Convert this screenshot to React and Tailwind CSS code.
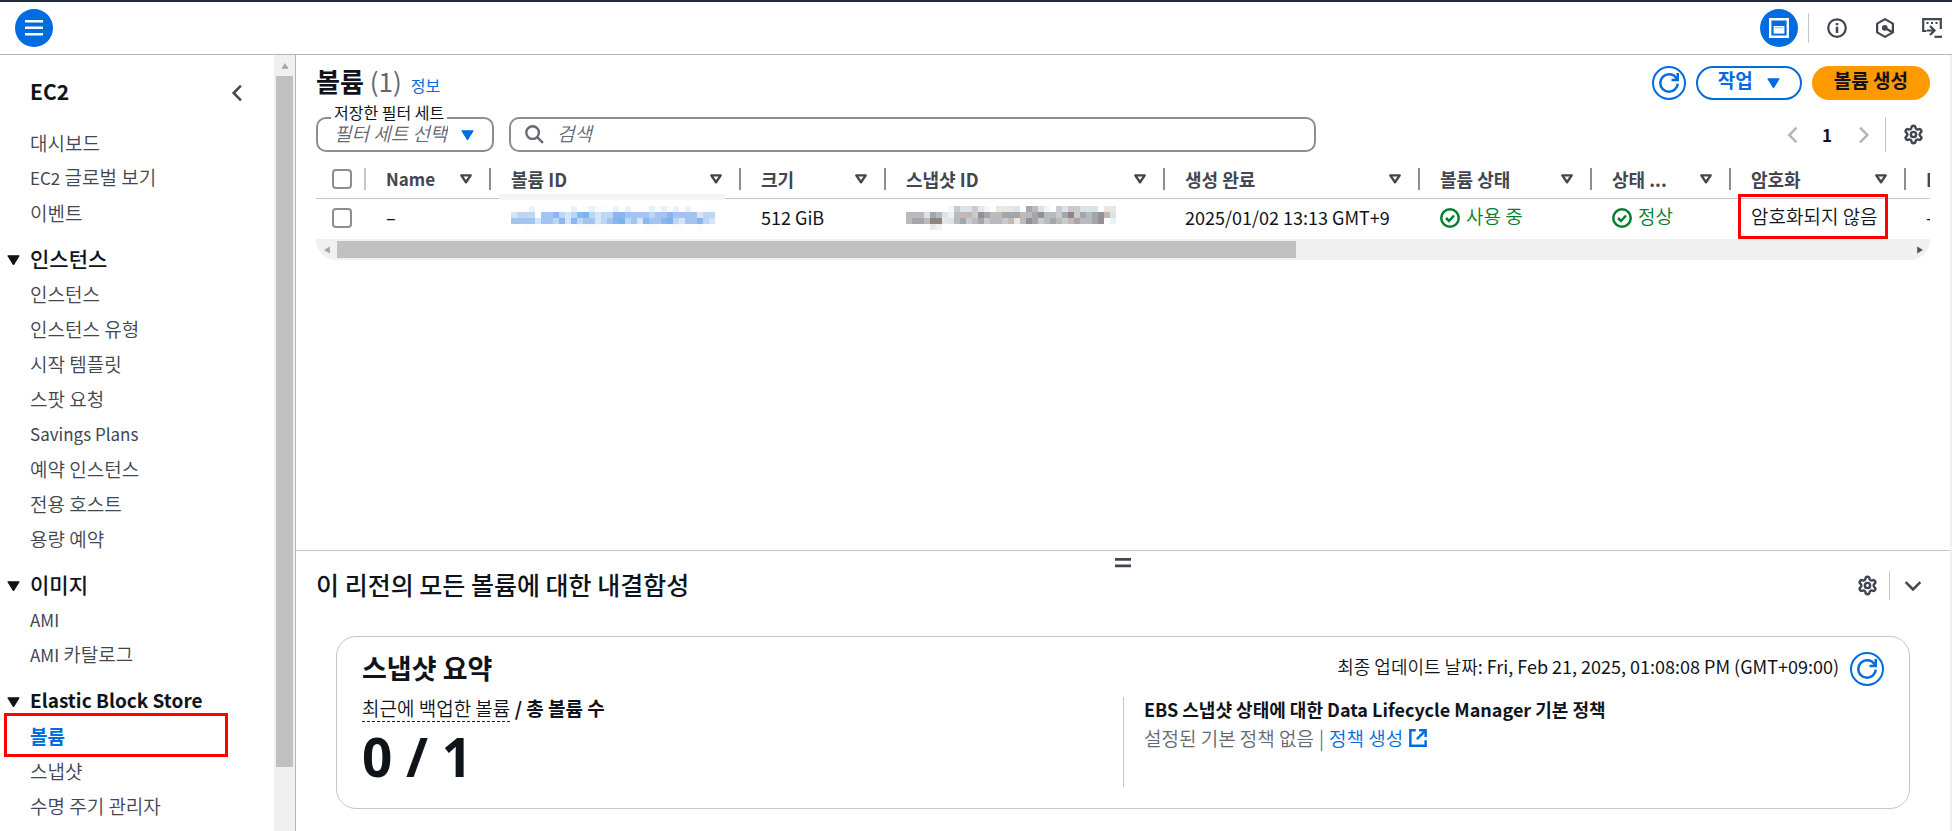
import { Settings } from "lucide-react";

const NAV = [
  { items: ["대시보드", "EC2 글로벌 보기", "이벤트"] },
  {
    title: "인스턴스",
    items: ["인스턴스", "인스턴스 유형", "시작 템플릿", "스팟 요청", "Savings Plans", "예약 인스턴스", "전용 호스트", "용량 예약"],
  },
  { title: "이미지", items: ["AMI", "AMI 카탈로그"] },
  { title: "Elastic Block Store", latin: true, items: ["볼륨", "스냅샷", "수명 주기 관리자"] },
];

const ACTIVE = "볼륨";

/* Latin runs are set slightly smaller and heavier than the light Hangul around them. */
function Mixed({ text }) {
  return text
    .split(/([A-Za-z0-9][A-Za-z0-9 ]*[A-Za-z0-9])/)
    .filter(Boolean)
    .map((part, i) =>
      /[A-Za-z]/.test(part) ? (
        <span key={i} className="text-[17px] font-normal">{part}</span>
      ) : (
        <span key={i}>{part}</span>
      )
    );
}

function Triangle({ className }) {
  return (
    <svg viewBox="0 0 13 11" className={className} fill="currentColor" stroke="currentColor" strokeWidth="1" strokeLinejoin="round" aria-hidden="true">
      <path d="M.8 .8h11.4L6.5 10z" />
    </svg>
  );
}

function SortIcon() {
  return (
    <svg viewBox="0 0 12 10" className="h-[10px] w-[12px] shrink-0" fill="none" stroke="currentColor" strokeWidth="2.4" strokeLinejoin="round" aria-hidden="true">
      <path d="M1.3 1.4h9.4L6 8.2z" />
    </svg>
  );
}

function Chevron({ d, className }) {
  return (
    <svg viewBox="0 0 16 16" className={className} fill="none" stroke="currentColor" strokeWidth="2.2" aria-hidden="true">
      <path d={d} />
    </svg>
  );
}

function RefreshIcon() {
  return (
    <svg viewBox="0 0 16 16" className="size-5 shrink-0" fill="none" stroke="currentColor" strokeWidth="2" aria-hidden="true">
      <path d="M15 8.500c-.3 3.600-3.300 6.500-7 6.500-3.870 0-7-3.130-7-7s3.130-7 7-7c2.800 0 5.200 1.400 6.400 4" />
      <path d="M10 5.500h5V0" />
    </svg>
  );
}

function StatusIcon() {
  return (
    <svg viewBox="0 0 16 16" className="size-5 shrink-0" fill="none" stroke="currentColor" strokeWidth="2" aria-hidden="true">
      <circle cx="8" cy="8" r="7" />
      <path d="M4.800 8l2.400 2.400 4-4.400" />
    </svg>
  );
}

function ExternalIcon() {
  return (
    <svg viewBox="0 0 16 16" className="size-[18px]" fill="none" stroke="currentColor" strokeWidth="2.2" aria-hidden="true">
      <path d="M6 1.200H1.200v13.600h13.600V10" />
      <path d="M9 1.200h5.800V7" />
      <path d="M14.800 1.200L7 9" />
    </svg>
  );
}

const INK = {
  a: "#fafcff", b: "#e8f2fb", c: "#d5e5f8", d: "#bcd7f6", e: "#a3c4f1", f: "#8cb4ee", g: "#7ab2f2",
  1: "#f7f6f5", 2: "#e8e7e5", 3: "#dbe3ea", 4: "#c9cacd", 5: "#b9babd", 6: "#a5a6ab", 7: "#929197", 8: "#8f8481", 9: "#c3b8b3",
};

function Mosaic({ rows }) {
  return (
    <svg width={rows[0].length * 6} height={rows.length * 6} shapeRendering="crispEdges" aria-hidden="true">
      {rows.flatMap((row, y) =>
        [...row].map((c, x) => (INK[c] ? <rect key={`${x}-${y}`} x={x * 6} y={y * 6} width="6" height="6" fill={INK[c]} /> : null))
      )}
    </svg>
  );
}

const VOLUME_MOSAIC = [
  "...b.aaaa.b.abaa.b.baaababab.b..aa",
  "cddd.eefdcdfgdcddffeeeedeefeeeecdd",
  "eeeeceedfcfdeecdefgdecfeefgdceefdc",
  "..a........aaaa.......aaa..aa..a..",
];
const SNAPSHOT_MOSAIC = [
  ".......1433421.2223.6531.4344333.22",
  "5553653b595476956669567554684656793",
  "966588235645645549257645654965567.b",
  "....2b.............................",
];

const COLUMNS = [
  { label: "Name", width: "w-[125px]", latin: true },
  { label: "볼륨 ID", width: "w-[250px]" },
  { label: "크기", width: "w-[145px]" },
  { label: "스냅샷 ID", width: "w-[279px]" },
  { label: "생성 완료", width: "w-[255px]" },
  { label: "볼륨 상태", width: "w-[172px]" },
  { label: "상태 ...", width: "w-[139px]" },
  { label: "암호화", width: "w-[175px]" },
  { label: "KMS 키 ID", width: "w-[200px]" },
];

function Status({ children }) {
  return (
    <span className="flex items-center gap-[6px] text-[#00802f]">
      <StatusIcon />
      <span className="pb-1">{children}</span>
    </span>
  );
}

function Check({ label }) {
  return (
    <input
      type="checkbox"
      aria-label={label}
      className="mx-auto block size-5 appearance-none rounded-[4px] border-2 border-[#8c8c94] bg-white checked:bg-[#006ce0]"
    />
  );
}

function TopBar() {
  return (
    <header className="flex h-[55px] shrink-0 items-center justify-between border-b border-t-2 border-b-[#b4b4bb] border-t-[#232b37] pl-[15px] pr-[10px]">
      <button aria-label="메뉴" className="flex size-[38px] items-center justify-center rounded-full bg-[#006ce0] text-white">
        <svg viewBox="0 0 18 16" className="h-4 w-[18px]" fill="currentColor" aria-hidden="true">
          <path d="M0 0h18v2.500H0zM0 6.500h18V9H0zM0 13h18v2.500H0z" />
        </svg>
      </button>
      <div className="flex items-center text-[#424650]">
        <button aria-label="분할 패널" className="flex size-[38px] items-center justify-center rounded-full bg-[#006ce0] text-white">
          <svg viewBox="0 0 20 20" className="size-5" fill="none" aria-hidden="true">
            <path d="M1.200 1.200h17.600v17.600H1.200z" stroke="currentColor" strokeWidth="2.400" />
            <path d="M4.600 8h10.800v7.600H4.600z" fill="currentColor" />
            <path d="M6 9.600h8" stroke="#9cc8f8" strokeWidth="1.200" />
          </svg>
        </button>
        <span className="ml-[10px] h-[30px] w-px bg-[#c6c6cd]" />
        <button aria-label="정보" className="ml-[18px]">
          <svg viewBox="0 0 16 16" className="size-5" fill="none" stroke="currentColor" strokeWidth="1.800" aria-hidden="true">
            <circle cx="8" cy="8" r="7" />
            <path d="M8 7v5M8 3.900v1.900" strokeWidth="2" />
          </svg>
        </button>
        <button aria-label="Amazon Q" className="ml-[28px]">
          <svg viewBox="0 0 16 16" className="size-5" fill="none" stroke="currentColor" strokeWidth="1.800" strokeLinejoin="round" aria-hidden="true">
            <path d="M8 .9l6.300 3.600v7L8 15.100l-6.300-3.600v-7z" />
            <circle cx="7.800" cy="7.800" r="2.300" fill="currentColor" stroke="none" />
            <path d="M8 8l5.600 3.200" strokeWidth="2" />
          </svg>
        </button>
        <button aria-label="CloudShell" className="ml-[27px]">
          <svg viewBox="0 0 20 20" className="size-5" fill="none" stroke="currentColor" strokeWidth="2.200" aria-hidden="true">
            <path d="M4.500 13H1.200V1.200h17.600V11" />
            <path d="M4.500 5h2M9 5h2M13.500 5h2" />
            <path d="M5 12.500h7M8 8l4.500 4.500L8 17" />
            <path d="M12.500 18.800H20" />
          </svg>
        </button>
      </div>
    </header>
  );
}

function Sidebar() {
  return (
    <div className="flex w-[295px] shrink-0">
      <nav className="min-w-0 flex-1 overflow-hidden pt-5 text-[19px] font-[350] text-[#424650]">
        <div className="flex h-9 items-center justify-between pl-[30px] pr-[28px]">
          <h2 className="pb-[2px] text-[21px] font-bold text-[#0f141a]">EC2</h2>
          <button aria-label="탐색 닫기">
            <Chevron d="M11.500 1.500L5 8l6.500 6.500" className="size-[18px]" />
          </button>
        </div>
        <div className="mt-[14px] flex flex-col gap-[11px]">
          {NAV.map((group, g) => (
            <section key={g}>
              {group.title && (
                <h3 className="flex h-[35px] items-center pl-[7px] text-[#0f141a]">
                  <Triangle className="mt-1 h-[11px] w-[13px]" />
                  <span className={group.latin ? "ml-[10px] text-[19px] font-bold" : "ml-[10px] text-[21px] font-medium"}>{group.title}</span>
                </h3>
              )}
              <ul>
                {group.items.map((item) => (
                  <li key={item} className="relative flex h-[35px] items-center pl-[30px] leading-[22px]">
                    <a href="#" className={item === ACTIVE ? "font-bold text-[#006ce0]" : ""}>
                      <Mixed text={item} />
                    </a>
                    {item === ACTIVE && (
                      <span className="pointer-events-none absolute -top-[5px] left-1 h-11 w-[224px] border-[3px] border-[#fe0000]" />
                    )}
                  </li>
                ))}
              </ul>
            </section>
          ))}
        </div>
      </nav>
      <div className="flex w-[21px] shrink-0 flex-col items-center bg-[#f0f0f0]">
        <div className="flex h-[21px] shrink-0 items-center">
          <Triangle className="h-[6px] w-[10px] rotate-180 text-[#a3a3a3]" />
        </div>
        <div className="h-[89%] w-[17px] bg-[#c1c1c1]" />
      </div>
    </div>
  );
}

function VolumeTable() {
  return (
    <div>
      <div className="overflow-hidden">
        <table className="w-[1790px] table-fixed border-collapse text-left">
          <thead>
            <tr className="h-[46px] border-b border-[#c6c6cd] text-[#424650]">
              <th scope="col" className="w-[50px] p-0 align-middle">
                <div className="flex items-center pl-4 pt-2">
                  <div className="w-5"><Check label="모두 선택" /></div>
                  <span className="ml-3 h-[22px] w-[2px] bg-[#c6c6cd]" />
                </div>
              </th>
              {COLUMNS.map((c) => (
                <th key={c.label} scope="col" className={`${c.width} p-0 align-middle font-bold`}>
                  <div className="mt-2 flex h-[22px] items-center pl-5">
                    <span className={`flex-1 whitespace-nowrap leading-[22px] ${c.latin ? "text-[17px]" : "text-[18px]"}`}>{c.label}</span>
                    <SortIcon />
                    <span className="ml-[17px] h-[22px] w-[2px] bg-[#8c8c94]" />
                  </div>
                </th>
              ))}
            </tr>
          </thead>
          <tbody>
            <tr className="h-[41px] whitespace-nowrap text-[18px] text-[#0f141a] *:p-0 *:pb-[2px]">
              <td>
                <div className="ml-4 w-5"><Check label="볼륨 선택" /></div>
              </td>
              <td><div className="pl-5">–</div></td>
              <td className="relative">
                <span className="absolute -top-[5px] left-2 h-[6px] w-[226px] bg-[#f5f5f5]" />
                <div className="pl-5"><Mosaic rows={VOLUME_MOSAIC} /></div>
              </td>
              <td><div className="pl-5">512 GiB</div></td>
              <td><div className="pl-5"><Mosaic rows={SNAPSHOT_MOSAIC} /></div></td>
              <td><div className="pl-5">2025/01/02 13:13 GMT+9</div></td>
              <td className="text-[19px] font-[350]"><div className="pl-5"><Status>사용 중</Status></div></td>
              <td className="text-[19px] font-[350]"><div className="pl-5"><Status>정상</Status></div></td>
              <td className="relative text-[19px] font-[350]">
                <div className="pb-1 pl-5">암호화되지 않음</div>
                <span className="pointer-events-none absolute -top-[5px] left-[7px] h-[45px] w-[150px] border-[3px] border-[#fe0000]" />
              </td>
              <td><div className="pl-5">–</div></td>
            </tr>
          </tbody>
        </table>
      </div>
      <div className="flex h-[21px] items-center rounded-b-[20px] bg-[#f0f0f0]">
        <span className="flex w-[21px] shrink-0 justify-center">
          <Triangle className="h-[6px] w-[10px] rotate-90 text-[#a3a3a3]" />
        </span>
        <span className="flex-1"><span className="block h-[17px] w-[61%] bg-[#c1c1c1]" /></span>
        <span className="flex w-[21px] shrink-0 justify-center">
          <Triangle className="h-[6px] w-[10px] -rotate-90 text-[#505050]" />
        </span>
      </div>
    </div>
  );
}

function Volumes() {
  return (
    <section className="flex-1 overflow-hidden px-5 pt-[11px]">
      <div className="flex h-[34px] items-center justify-between">
        <div className="flex items-baseline pb-1">
          <h1 className="text-[26px] font-bold leading-[34px]">
            볼륨 <span className="font-normal text-[#656871]">(1)</span>
          </h1>
          <a href="#" className="ml-[9px] text-[16px] text-[#006ce0]">정보</a>
        </div>
        <div className="flex items-center gap-[10px] text-[19px] font-bold leading-[22px]">
          <button aria-label="새로 고침" className="flex size-[34px] items-center justify-center rounded-full border-2 border-[#006ce0] text-[#006ce0]">
            <RefreshIcon />
          </button>
          <button className="flex h-[34px] items-center gap-[14px] rounded-full border-2 border-[#006ce0] px-5 pb-[6px] text-[#006ce0]">
            작업
            <Triangle className="mt-[6px] h-[11px] w-[13px]" />
          </button>
          <button className="h-[34px] rounded-full bg-[#ff9900] px-[22px] pb-[6px] text-[#0f141a]">볼륨 생성</button>
        </div>
      </div>

      <div className="mt-[17px] flex h-[35px] items-stretch">
        <div className="relative w-[178px] shrink-0 text-[#006ce0]">
          <label htmlFor="filter-set" className="absolute -top-[13px] left-[15px] whitespace-nowrap bg-white px-[3px] text-[16px] leading-4 text-[#0f141a]">
            저장한 필터 세트
          </label>
          <select id="filter-set" className="size-full appearance-none rounded-[10px] border-2 border-[#8c8c94] bg-white pb-1 pl-4 pr-11 text-[19px] font-[350] italic leading-[22px] text-[#656871]">
            <option>필터 세트 선택</option>
          </select>
          <Triangle className="pointer-events-none absolute right-[20px] top-[13px] h-[11px] w-[13px]" />
        </div>
        <div className="ml-[15px] flex w-1/2 items-center rounded-[10px] border-2 border-[#8c8c94] pl-[14px] text-[#656871]">
          <svg viewBox="0 0 18 18" className="size-[19px] shrink-0" fill="none" stroke="currentColor" strokeWidth="2.200" aria-hidden="true">
            <circle cx="7.200" cy="7.200" r="6" />
            <path d="M11.500 11.500l5.500 5.500" />
          </svg>
          <input aria-label="검색" placeholder="검색" className="ml-[13px] min-w-0 flex-1 pb-1 text-[19px] font-[350] leading-[22px] outline-none placeholder:italic placeholder:text-[#656871]" />
        </div>
        <div className="ml-auto flex items-center">
          <button aria-label="이전 페이지" className="text-[#b4b4bb]"><Chevron d="M12 1.500L5.500 8l6.500 6.500" className="size-[18px]" /></button>
          <button className="ml-4 w-5 text-[17px] font-bold">1</button>
          <button aria-label="다음 페이지" className="ml-[18px] text-[#b4b4bb]"><Chevron d="M4.500 1.500L11 8l-6.500 6.500" className="size-[18px]" /></button>
          <span className="ml-[12px] h-full w-px bg-[#c6c6cd]" />
          <button aria-label="기본 설정" className="ml-[17px] mr-[6px] text-[#424650]"><Settings size={21} strokeWidth={2.8} /></button>
        </div>
      </div>

      <VolumeTable />
    </section>
  );
}

function ResiliencePanel() {
  return (
    <section className="shrink-0 border-t border-[#c6c6cd] px-5 pb-[22px] pt-1">
      <button aria-label="패널 크기 조정" className="mx-auto flex h-4 items-center">
        <svg viewBox="0 0 16 10" className="h-[10px] w-4" fill="#424650" aria-hidden="true">
          <path d="M0 0h16v2.700H0zM0 6.500h16v2.700H0z" />
        </svg>
      </button>
      <div className="flex h-[29px] items-center justify-between">
        <h2 className="pb-1 text-[25px] font-medium leading-[28px]">이 리전의 모든 볼륨에 대한 내결함성</h2>
        <div className="mr-[8px] flex items-center text-[#424650]">
          <button aria-label="패널 설정"><Settings size={21} strokeWidth={2.8} /></button>
          <span className="ml-[11px] h-[29px] w-px bg-[#c6c6cd]" />
          <button aria-label="패널 접기" className="ml-[14px]"><Chevron d="M1.500 4.500L8 11l6.500-6.500" className="size-[18px]" /></button>
        </div>
      </div>

      <div className="mx-5 mt-9 rounded-[20px] border border-[#c6c6cd] px-[25px] pb-[21px] pt-[14px]">
        <div className="flex h-9 items-center justify-between">
          <h3 className="pb-[3px] text-[27px] font-bold leading-[30px]">스냅샷 요약</h3>
          <div className="flex items-center gap-[11px]">
            <p className="pb-[6px] text-[18px] leading-6">
              <span className="font-[350]">최종 업데이트 날짜</span>: Fri, Feb 21, 2025, 01:08:08 PM (GMT+09:00)
            </p>
            <button aria-label="요약 새로 고침" className="flex size-[34px] items-center justify-center rounded-full border-2 border-[#006ce0] text-[#006ce0]">
              <RefreshIcon />
            </button>
          </div>
        </div>
        <div className="mt-[10px] grid grid-cols-2">
          <div>
            <p className="text-[19px] font-bold leading-[22px]">
              <span className="border-b border-dashed border-[#0f141a] font-[350]">최근에 백업한 볼륨</span> / 총 볼륨 수
            </p>
            <p className="mt-[8px] font-['Noto_Sans'] text-[53px] font-bold leading-[60px]">0 / 1</p>
          </div>
          <div className="border-l border-[#c6c6cd] pl-5">
            <h4 className="text-[18px] font-bold leading-6">EBS 스냅샷 상태에 대한 Data Lifecycle Manager 기본 정책</h4>
            <p className="mt-1 flex items-center text-[19px] font-[350] leading-[26px] text-[#656871]">
              설정된 기본 정책 없음 <span className="mx-[5px]">|</span>
              <a href="#" className="flex items-center gap-[6px] text-[#006ce0]">
                정책 생성 <ExternalIcon />
              </a>
            </p>
          </div>
        </div>
      </div>
    </section>
  );
}

export default function App() {
  return (
    <div className="flex h-screen flex-col overflow-hidden bg-white font-['Noto_Sans_CJK_KR',sans-serif] text-[#0f141a]">
      <TopBar />
      <div className="flex min-h-0 flex-1">
        <Sidebar />
        <main className="flex min-w-0 flex-1 flex-col border-l border-r-2 border-l-[#b4b4bb] border-r-[#f0f0f0]">
          <Volumes />
          <ResiliencePanel />
        </main>
      </div>
    </div>
  );
}
